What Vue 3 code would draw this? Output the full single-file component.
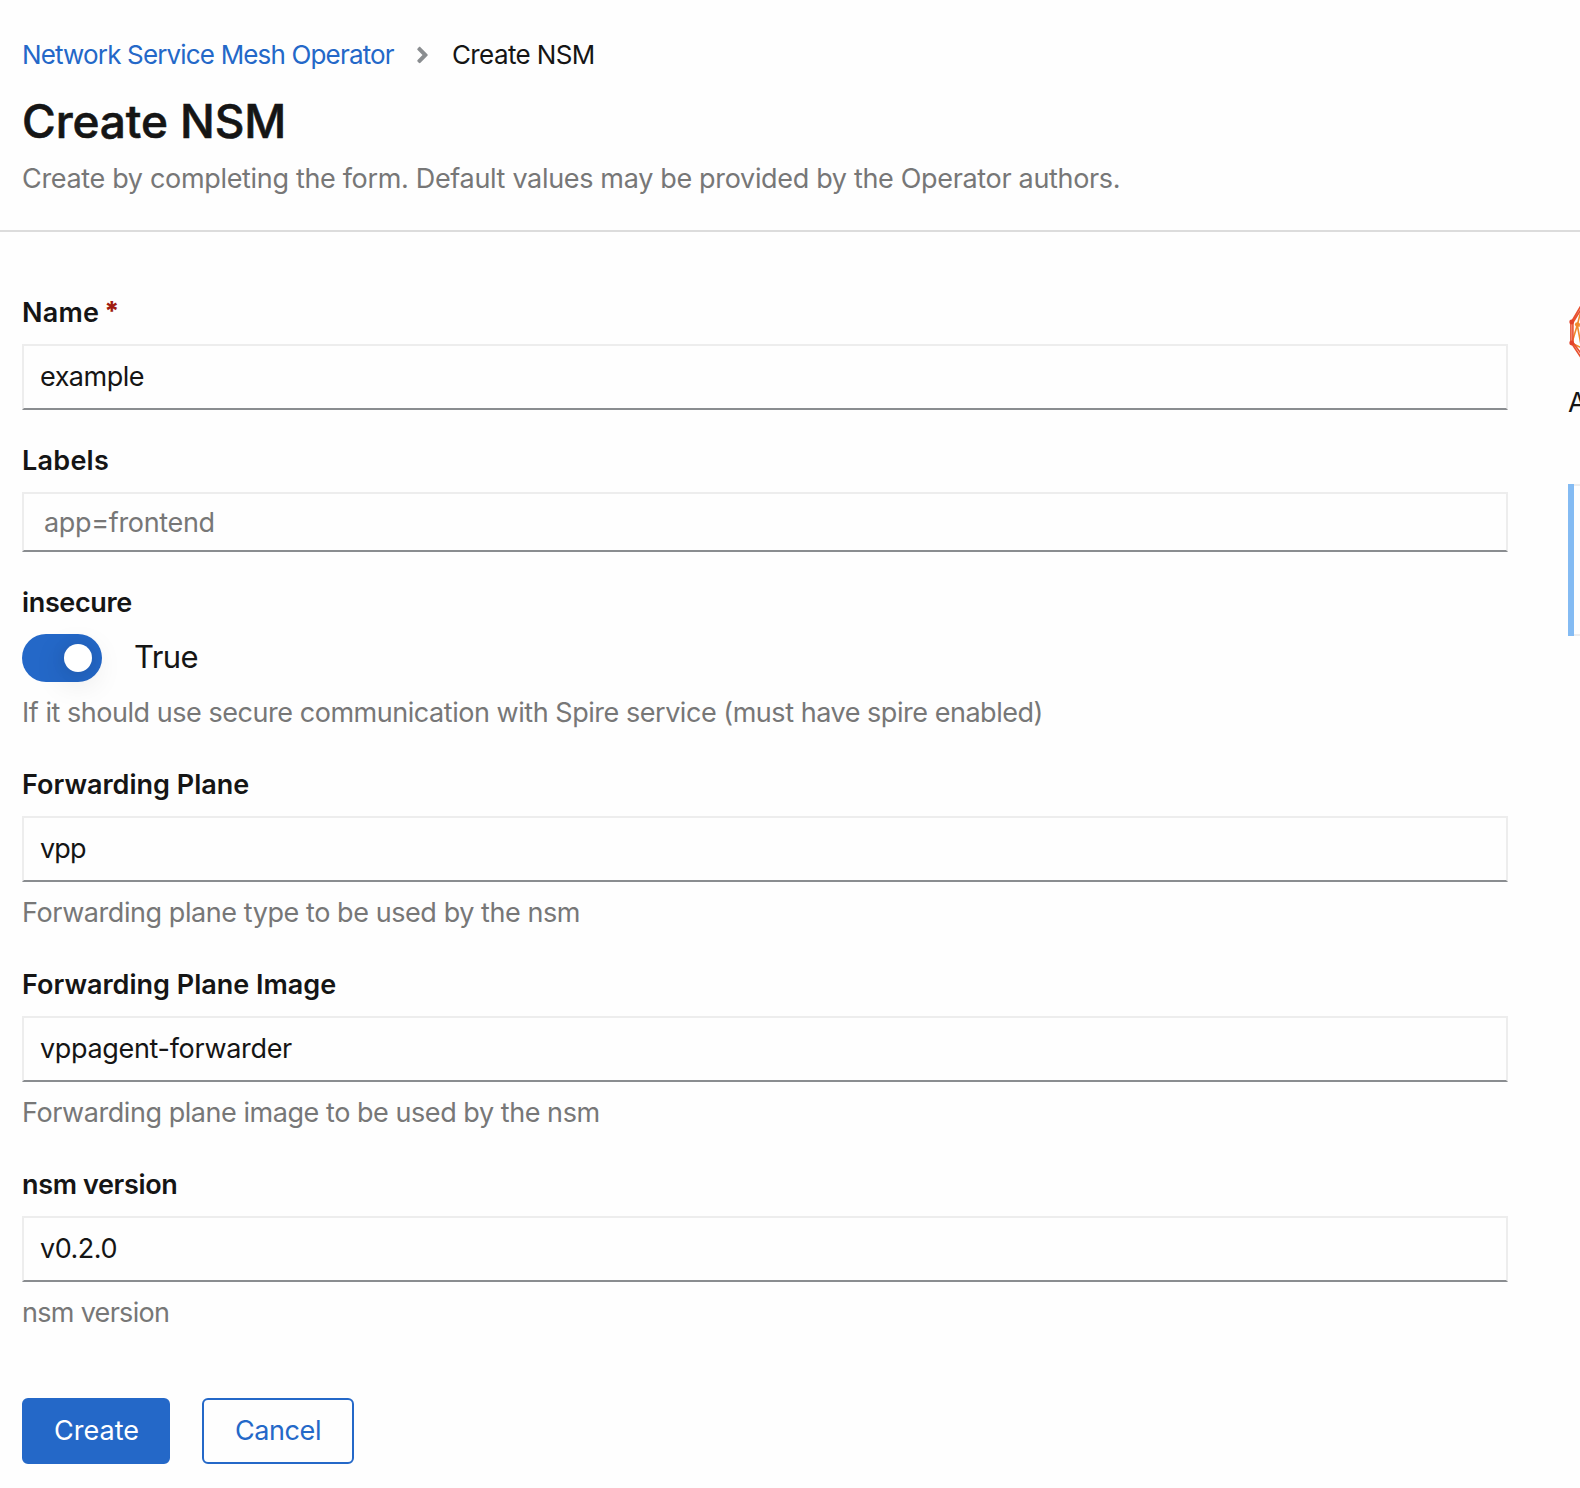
<script setup>
import { reactive, ref } from 'vue'

const name = reactive({ label: 'Name', value: 'example', labelTrack: 0.25, valueTrack: -0.5 })
const labels = ref('')
const insecure = ref(true)

// Tracking values are in pixels.
const specFields = reactive([
  {
    id: 'forwardingPlane', label: 'Forwarding Plane', value: 'vpp',
    help: 'Forwarding plane type to be used by the nsm',
    labelTrack: 0, valueTrack: -0.9, helpTrack: -0.43,
  },
  {
    id: 'forwardingPlaneImage', label: 'Forwarding Plane Image', value: 'vppagent-forwarder',
    help: 'Forwarding plane image to be used by the nsm',
    labelTrack: 0, valueTrack: -0.33, helpTrack: -0.45,
  },
  {
    id: 'version', label: 'nsm version', value: 'v0.2.0',
    help: 'nsm version',
    labelTrack: -0.36, valueTrack: -0.48, helpTrack: -0.7,
  },
])

const track = (px) => ({ letterSpacing: `${px}px` })
</script>

<template>
  <div class="page">
    <header class="header">
      <nav class="breadcrumb">
        <a class="crumb-link">Network Service Mesh Operator</a>
        <svg class="crumb-sep" viewBox="0 0 256 512" width="13" height="26" aria-hidden="true">
          <path fill="currentColor" d="M224.3 273l-136 136c-9.4 9.4-24.6 9.4-33.9 0l-22.6-22.6c-9.4-9.4-9.4-24.6 0-33.9l96.4-96.4-96.4-96.4c-9.4-9.4-9.4-24.6 0-33.9L54.3 103c9.4-9.4 24.6-9.4 33.9 0l136 136c9.5 9.4 9.5 24.6.1 34z" />
        </svg>
        <span class="crumb-current">Create NSM</span>
      </nav>
      <h1 class="title">Create NSM</h1>
      <p class="subtitle">Create by completing the form. Default values may be provided by the Operator authors.</p>
    </header>

    <div class="body">
      <form class="form" @submit.prevent>
        <div class="field">
          <label class="label" for="name" :style="track(name.labelTrack)">{{ name.label }}<span class="required">*</span></label>
          <input id="name" v-model="name.value" class="input" type="text" :style="track(name.valueTrack)" />
        </div>

        <div class="field">
          <label class="label label-tags" for="tags">Labels</label>
          <input id="tags" v-model="labels" class="input input-tags" type="text" placeholder="app=frontend" />
        </div>

        <div class="field">
          <span class="label label-switch">insecure</span>
          <button type="button" class="switch" @click="insecure = !insecure">
            <span class="switch-track" :class="{ on: insecure }"><span class="switch-knob"></span></span>
            <span class="switch-text">{{ insecure ? 'True' : 'False' }}</span>
          </button>
          <p class="help help-switch">If it should use secure communication with Spire service (must have spire enabled)</p>
        </div>

        <div v-for="f in specFields" :key="f.id" class="field">
          <label class="label" :for="f.id" :style="track(f.labelTrack)">{{ f.label }}</label>
          <input :id="f.id" v-model="f.value" class="input" type="text" :style="track(f.valueTrack)" />
          <p class="help" :style="track(f.helpTrack)">{{ f.help }}</p>
        </div>

        <div class="actions">
          <button type="submit" class="btn btn-primary">Create</button>
          <button type="button" class="btn btn-secondary">Cancel</button>
        </div>
      </form>

      <aside class="aside">
        <svg class="logo" width="64" height="64" viewBox="0 0 64 64" aria-hidden="true">
          <g fill="none" stroke-width="1.6">
            <path stroke="#f08a2c" d="M9.3 26L15 4M9.3 26L15 57M3.5 44L16 50M9.3 26L20 22M9.3 26L20 30M9.3 26L4.5 42" />
            <path stroke="#e8502f" d="M2.9 23V44M4.9 23V44M3.4 23L16 1.5M4.6 24L17 4M3.4 44L16 63M4.6 43L17 60" />
          </g>
          <circle cx="9.3" cy="25.6" r="2.4" fill="#f08a2c" />
          <circle cx="3.7" cy="23" r="2.4" fill="#e2432a" />
          <circle cx="3.7" cy="44" r="2.4" fill="#e2432a" />
        </svg>
        <p class="aside-text">A</p>
        <div class="callout"></div>
      </aside>
    </div>
  </div>
</template>

<style>
body {
  margin: 0;
  background: #fefefe;
}
</style>

<style scoped>
.page {
  width: 100%;
  height: 1488px;
  overflow: hidden;
  background: #fefefe;
  color: #151515;
  font-family: Inter, "Open Sans", sans-serif;
  font-size: 27px;
  line-height: 42px;
}

.page * {
  box-sizing: border-box;
}

h1,
p {
  margin: 0;
}

.header {
  padding: 35px 22px 30px;
  border-bottom: 2px solid #dcdcdc;
}

.breadcrumb {
  display: flex;
  align-items: center;
  height: 40px;
  font-size: 26px;
  line-height: 40px;
  white-space: nowrap;
}

.crumb-link {
  width: 376px;
  color: #2468c8;
  letter-spacing: -0.84px;
}

.crumb-sep {
  margin: 0 23px 0 18px;
  color: #8a8d90;
}

.crumb-current {
  letter-spacing: -0.62px;
}

.title {
  margin-top: 16px;
  font-size: 46px;
  font-weight: 500;
  line-height: 60px;
  letter-spacing: -0.1px;
  -webkit-text-stroke: 0.6px #151515;
}

.subtitle {
  margin-top: 7px;
  color: #777;
  letter-spacing: -0.33px;
}

.body {
  display: flex;
  gap: 60px;
  padding-left: 22px;
}

.form {
  display: flex;
  flex: none;
  flex-direction: column;
  gap: 30px;
  width: 1486px;
  padding-top: 60px;
}

.field {
  display: flex;
  flex-direction: column;
}

.label {
  font-weight: 600;
}

.label-tags {
  letter-spacing: 0.26px;
}

.label-switch {
  letter-spacing: -0.35px;
}

.required {
  position: relative;
  top: -2px;
  margin-left: 5px;
  color: #a01c10;
  font-size: 26px;
  font-weight: 800;
  line-height: 1;
}

.input {
  width: 100%;
  height: 66px;
  margin: 10px 0 0;
  padding: 0 16px 2px;
  border: 2px solid #ededed;
  border-bottom-color: #8a8d90;
  border-radius: 0;
  outline: none;
  background: #fefefe;
  color: #151515;
  font: inherit;
}

.input-tags {
  height: 60px;
  padding: 0 20px;
  letter-spacing: -0.33px;
}

.input-tags::placeholder {
  color: #777;
  opacity: 1;
}

.help {
  margin-top: 10px;
  color: #777;
}

.help-switch {
  letter-spacing: -0.463px;
}

.switch {
  display: flex;
  align-items: center;
  gap: 32px;
  height: 48px;
  margin: 10px 0 0;
  padding: 0;
  border: 0;
  background: none;
  color: inherit;
  font: inherit;
}

.switch-track {
  display: flex;
  width: 80px;
  height: 48px;
  padding: 10px;
  border-radius: 24px;
  background: #8a8d90;
}

.switch-track.on {
  justify-content: flex-end;
  background: #2468c8;
}

.switch-knob {
  width: 28px;
  height: 28px;
  border-radius: 50%;
  background: #fff;
  box-shadow: 0 8px 32px rgba(3, 3, 3, 0.16), 0 0 16px rgba(3, 3, 3, 0.08);
}

.switch-text {
  padding-bottom: 2px;
  font-size: 31px;
  letter-spacing: -0.6px;
}

.actions {
  display: flex;
  gap: 32px;
  margin-top: 34px;
}

.btn {
  height: 66px;
  margin: 0;
  padding: 0;
  border: 2px solid #2468c8;
  border-radius: 6px;
  font: inherit;
}

.btn-primary {
  width: 148px;
  padding-left: 1px;
  background: #2468c8;
  color: #fff;
}

.btn-secondary {
  width: 152px;
  background: #fefefe;
  color: #2468c8;
  letter-spacing: -0.4px;
}

.aside {
  flex: none;
  width: 400px;
  padding-top: 67px;
}

.logo {
  display: block;
}

.aside-text {
  margin-top: 19px;
}

.callout {
  height: 152px;
  margin-top: 60px;
  border: solid #ededed;
  border-width: 2px 2px 2px 0;
}

/* The accent bar covers the full height, over the top and bottom rules. */
.callout::before {
  content: "";
  display: block;
  width: 6px;
  height: 152px;
  margin-top: -2px;
  background: #84bbf3;
}
</style>
